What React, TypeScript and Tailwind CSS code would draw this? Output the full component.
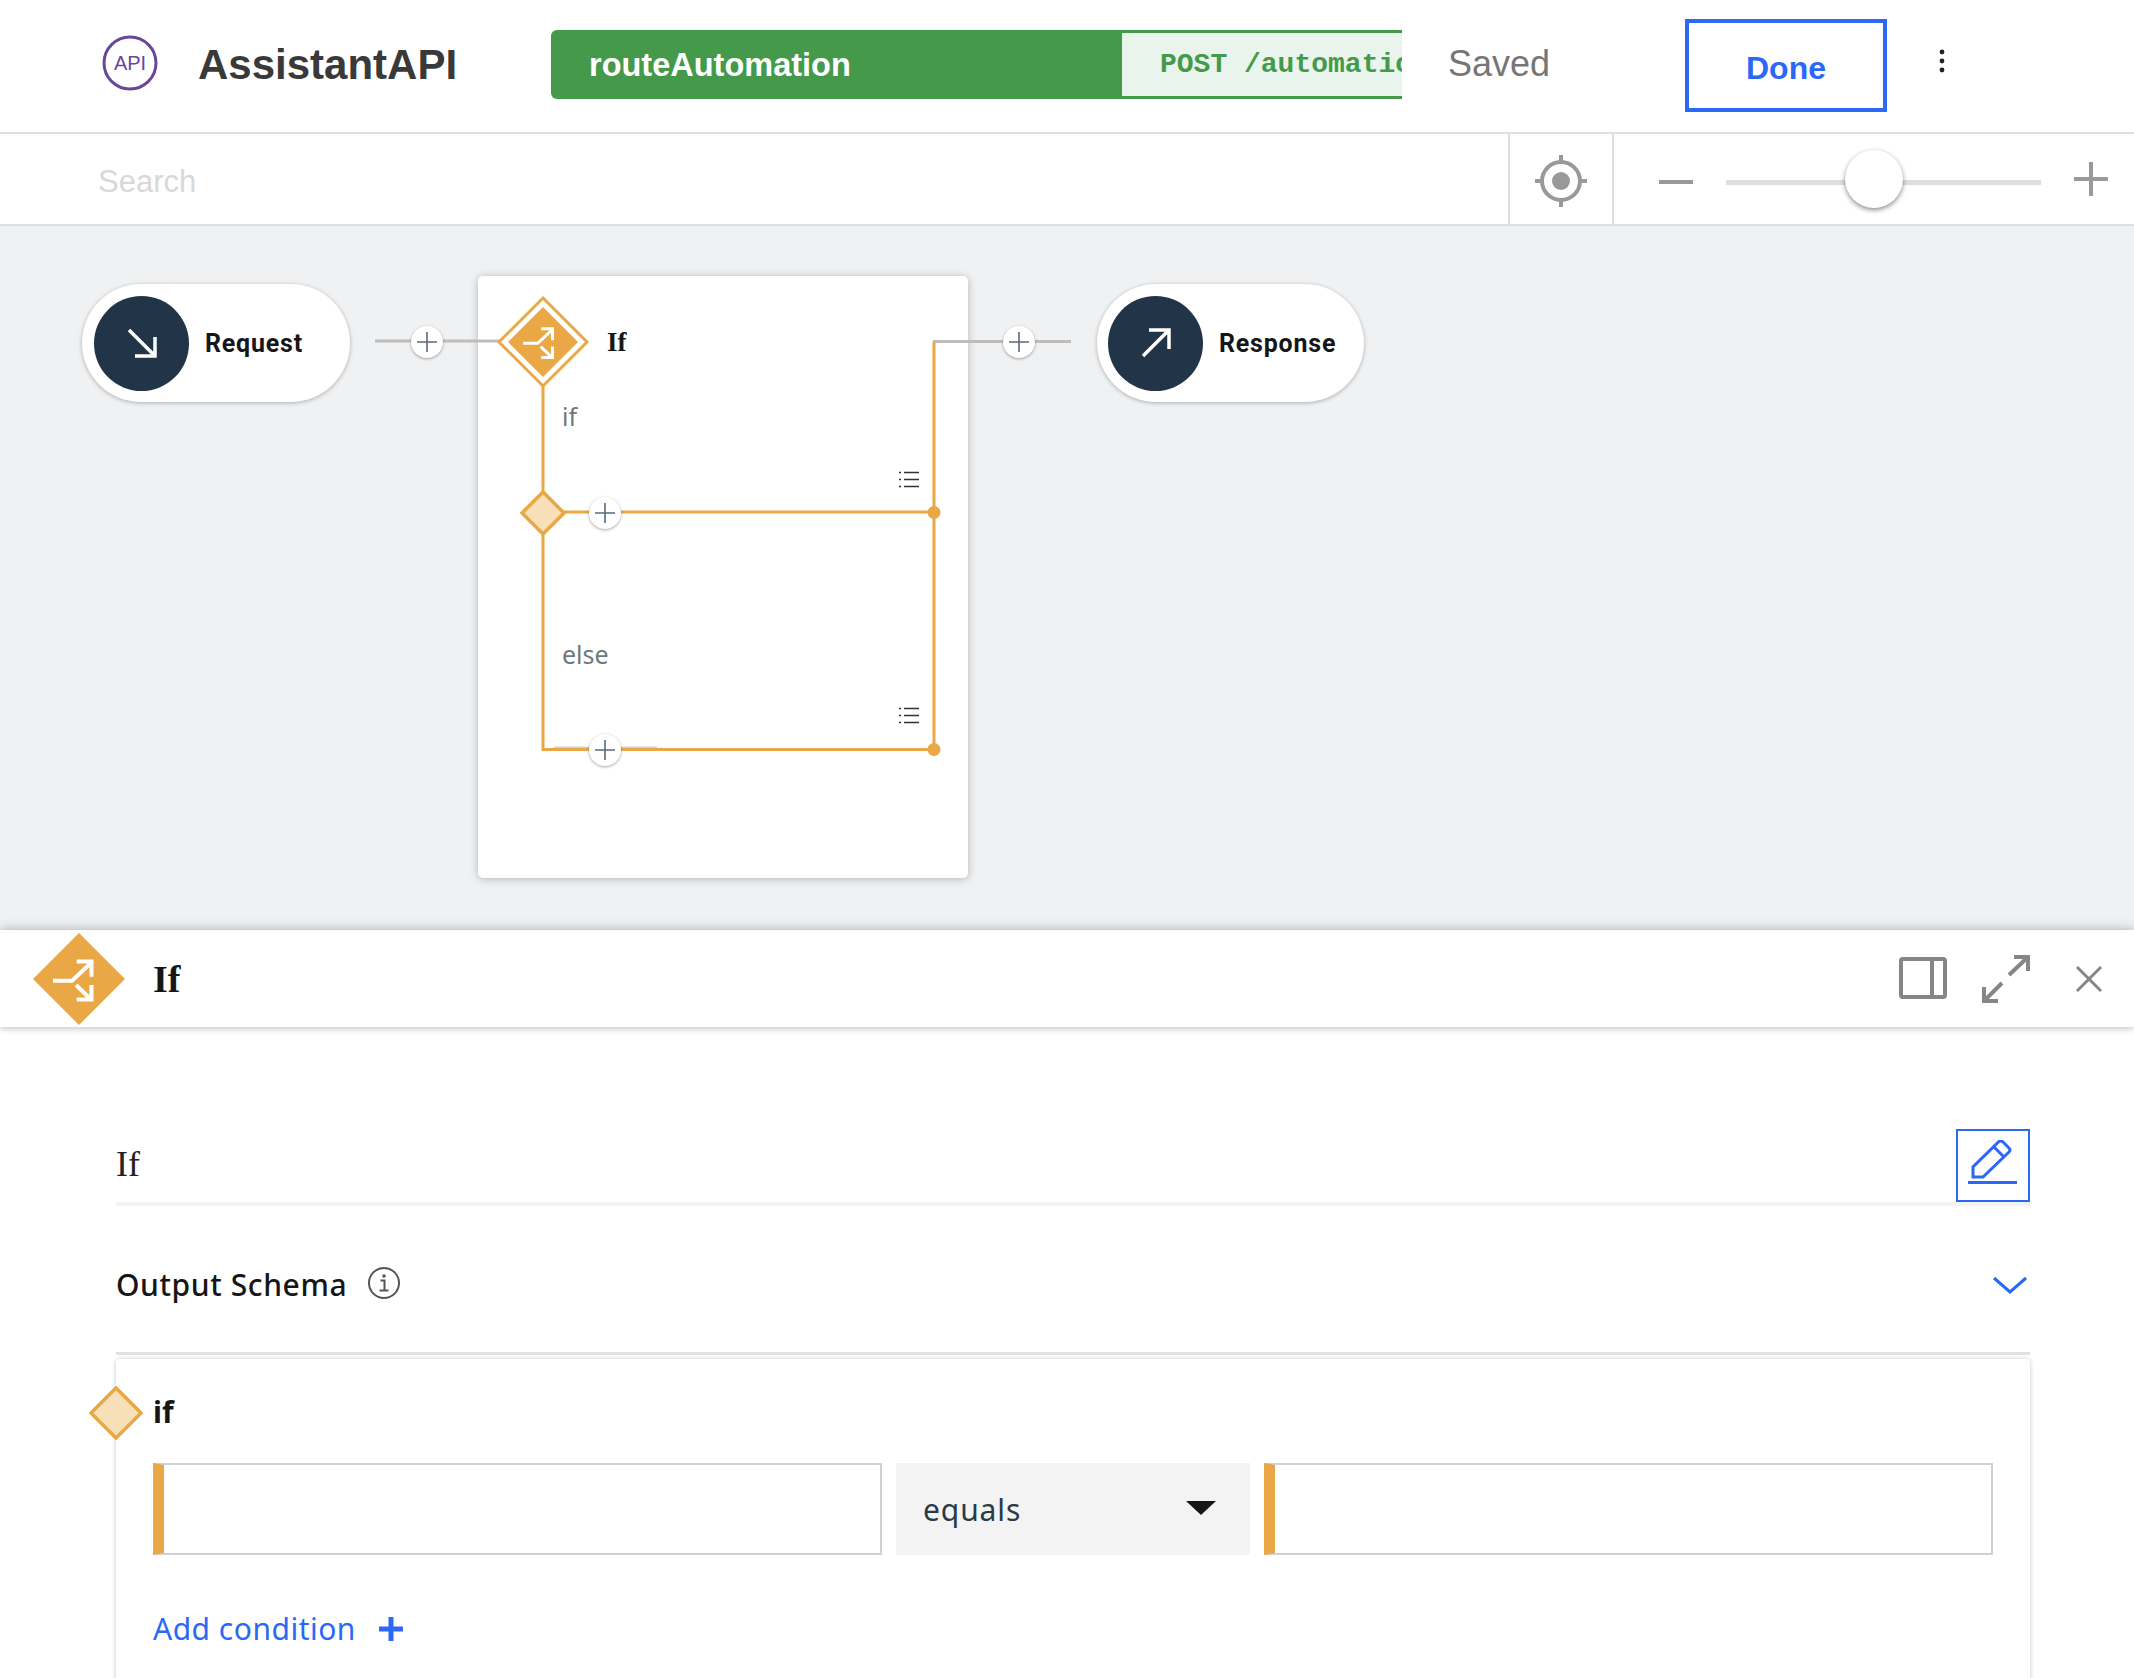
import React from "react";

const ORANGE = "#e9a845";

function Branch({ size }: { size: number }) {
  return (
    <svg width={size} height={size} viewBox="-46 -46 92 92" className="block">
      <polygon points="0,-46 46,0 0,46 -46,0" fill={ORANGE} />
      <g fill="none" stroke="#fff" strokeWidth="4">
        <path d="M-26 1.7H-7L13 -17" />
        <path d="M-2.3 -17.5H12.5V-2.3" />
        <path d="M-3 6L12 20.5" />
        <path d="M-2.3 20.5H12.5V6" />
      </g>
    </svg>
  );
}

function PlusButton({ className }: { className: string }) {
  return (
    <div className={`absolute flex h-8 w-8 items-center justify-center rounded-full bg-white shadow-[0_1px_3px_rgba(0,0,0,0.35)] ${className}`}>
      <svg width="20" height="20" viewBox="0 0 20 20">
        <path d="M10 0V20M0 10H20" stroke="#5a6b7b" strokeWidth="1.6" />
      </svg>
    </div>
  );
}

function ListIcon({ className }: { className: string }) {
  return (
    <svg width="20" height="17" viewBox="0 0 20 17" className={`absolute ${className}`}>
      <path d="M5 1.5H20M5 8.5H20M5 15.5H20" stroke="#2f3336" strokeWidth="1.5" />
      <path d="M0 1.5H2M0 8.5H2M0 15.5H2" stroke="#2f3336" strokeWidth="1.5" />
    </svg>
  );
}

function Pill({ label, className, arrow }: { label: string; className: string; arrow: string }) {
  return (
    <div className={`absolute flex h-[118px] items-center rounded-full bg-white shadow-[0_1px_4px_rgba(0,0,0,0.28)] ${className}`}>
      <div className="flex h-[95px] w-[95px] items-center justify-center rounded-full bg-[#223548]">
        <svg width="40" height="40" viewBox="0 0 40 40" fill="none" stroke="#fff" strokeWidth="3.5">
          <path d={arrow} />
        </svg>
      </div>
      <span className="ml-[16px] mt-[2px] font-['Roboto',sans-serif] text-[25px] font-bold tracking-[0.8px] text-[#161616]">{label}</span>
    </div>
  );
}

function Condition() {
  return <div className="h-full flex-1 border-2 border-l-[11px] border-[#cdd2d2] border-l-[#e9a845] bg-white" />;
}

export default function App() {
  return (
    <div className="flex h-[1678px] w-[2134px] flex-col overflow-hidden bg-white font-['Liberation_Sans',sans-serif]">
      <header className="flex h-[134px] shrink-0 items-center border-b-2 border-[#dfe0e2] pl-[102px]">
        <svg width="56" height="56" viewBox="0 0 56 56" className="mb-[6px]">
          <circle cx="28" cy="28" r="26" fill="none" stroke="#68479b" strokeWidth="3" />
          <text x="28" y="35" textAnchor="middle" fontSize="20" fontFamily="Liberation Sans" fill="#68479b">API</text>
        </svg>
        <h1 className="mb-[3px] ml-10 w-[353px] text-[42px] font-bold text-[#393939]">AssistantAPI</h1>
        <div className="mb-[4px] flex h-[69px] w-[851px] overflow-hidden rounded-l-[6px]">
          <div className="flex w-[571px] items-center bg-[#45994a] pl-[38px] pt-[2px] text-[32.5px] font-bold text-white">routeAutomation</div>
          <div className="flex flex-1 items-center overflow-hidden border-y-[3px] border-[#45994a] bg-[#e8f4ec] pl-[38px] pt-[1px]">
            <span className="whitespace-nowrap font-['Liberation_Mono',monospace] text-[28px] font-bold text-[#45994a]">POST /automation</span>
          </div>
        </div>
        <div className="mb-[4px] ml-[46px] w-[237px] text-[36px] text-[#767676]">Saved</div>
        <button className="mb-[1px] flex h-[93px] w-[202px] items-center justify-center border-[4px] border-[#2b68f6] pt-1 text-[32px] font-bold text-[#2b68f6]">Done</button>
        <svg width="8" height="24" viewBox="0 0 8 24" className="mb-[11px] ml-[51px]">
          <circle cx="4" cy="3" r="2.4" fill="#222" />
          <circle cx="4" cy="12" r="2.4" fill="#222" />
          <circle cx="4" cy="21" r="2.4" fill="#222" />
        </svg>
      </header>

      <div className="flex h-[92px] shrink-0 border-b-2 border-[#dfe0e2]">
        <input placeholder="Search" className="min-w-0 flex-1 pl-[98px] pt-[6px] text-[31px] outline-none placeholder:text-[#d8d8d8]" />
        <div className="flex w-[106px] shrink-0 items-center justify-center border-x-2 border-[#dfe0e2] pt-[3px]">
          <svg width="54" height="54" viewBox="0 0 54 54">
            <circle cx="27" cy="27" r="19" fill="none" stroke="#999" strokeWidth="4" />
            <circle cx="27" cy="27" r="9" fill="#999" />
            <path d="M27 1V9M27 45V53M1 27H9M45 27H53" stroke="#999" strokeWidth="4" />
          </svg>
        </div>
        <div className="flex w-[520px] shrink-0 items-center pl-[45px]">
          <div className="mt-[5px] h-1 w-[34px] bg-[#999]" />
          <div className="relative ml-[33px] mt-[6px] h-[5px] w-[315px] bg-[#dedede]">
            <div className="absolute left-[119px] top-[-30px] h-[58px] w-[58px] rounded-full bg-white shadow-[0_2px_5px_rgba(0,0,0,0.45)]" />
          </div>
          <svg width="34" height="34" viewBox="0 0 34 34" className="ml-[33px]">
            <path d="M17 0V34M0 17H34" stroke="#999" strokeWidth="4" />
          </svg>
        </div>
      </div>

      <main className="relative h-[704px] shrink-0 bg-[#f0f1f3]">
        <Pill label="Request" className="left-[82px] top-[58px] w-[268px] pl-3" arrow="M7 7L33 33M13 33H33V14" />
        <Pill label="Response" className="left-[1097px] top-[58px] w-[267px] pl-[11px]" arrow="M7 33L33 7M13 7H33V26" />

        <div className="absolute left-[478px] top-[50px] h-[602px] w-[490px] rounded-[5px] bg-white shadow-[0_1px_8px_rgba(0,0,0,0.25)]" />

        <svg width="2134" height="704" viewBox="0 226 2134 704" className="absolute inset-0">
          <path d="M375 341H505M933 341.500H1071" stroke="#bdbdbd" strokeWidth="3" fill="none" />
          <path d="M554 747.500H657" stroke="#d0d0d0" strokeWidth="2" fill="none" />
          <path d="M543 386V749.500H934M934 342V749M543 512H934" stroke={ORANGE} strokeWidth="3" fill="none" />
          <circle cx="934" cy="512.500" r="6.500" fill={ORANGE} />
          <circle cx="934" cy="749.500" r="6.500" fill={ORANGE} />
          <polygon points="543,298 587,342 543,386 499,342" fill="#fff" stroke={ORANGE} strokeWidth="3" />
          <polygon points="543,492 564,513 543,534 522,513" fill="#f7e0b8" stroke={ORANGE} strokeWidth="3.500" />
        </svg>

        <div className="absolute left-[508px] top-[81px]"><Branch size={70} /></div>
        <span className="absolute left-[607px] top-[100px] font-['Liberation_Serif',serif] text-[27px] font-bold leading-8 text-[#161616]">If</span>
        <span className="absolute left-[562px] top-[176px] font-['Noto_Sans',sans-serif] text-[25px] leading-7 text-[#6f7878]">if</span>
        <span className="absolute left-[562px] top-[414px] font-['Noto_Sans',sans-serif] text-[25px] leading-7 text-[#6f7878]">else</span>
        <ListIcon className="left-[899px] top-[245px]" />
        <ListIcon className="left-[899px] top-[481px]" />
        <PlusButton className="left-[411px] top-[100px]" />
        <PlusButton className="left-[589px] top-[271px]" />
        <PlusButton className="left-[589px] top-[508px]" />
        <PlusButton className="left-[1003px] top-[100px]" />
      </main>

      <section className="relative z-10 flex-1 bg-white shadow-[0_-3px_10px_rgba(0,0,0,0.15)]">
        <div className="flex h-[97px] items-center bg-white pl-[33px] pr-[31px] shadow-[0_2px_6px_rgba(0,0,0,0.22)]">
          <Branch size={92} />
          <h2 className="ml-[28px] mt-[2px] flex-1 font-['Liberation_Serif',serif] text-[38px] font-bold text-[#161616]">If</h2>
          <svg width="48" height="48" viewBox="0 0 48 48" fill="none" stroke="#868686" strokeWidth="4" className="mb-[2px] mr-[35px]">
            <rect x="2" y="5" width="44" height="38" rx="2" />
            <path d="M33 5V43" />
          </svg>
          <svg width="48" height="48" viewBox="0 0 48 48" fill="none" stroke="#868686" strokeWidth="4" className="mr-[45px]">
            <path d="M27 20L46 2M32 2H46V16M20 28L2 46M2 32V46H16" />
          </svg>
          <svg width="28" height="28" viewBox="0 0 28 28" fill="none" stroke="#868686" strokeWidth="3">
            <path d="M2 2L26 26M26 2L2 26" />
          </svg>
        </div>

        <div className="pl-[116px] pr-[104px] pt-[102px]">
          <div className="flex h-[77px] items-center justify-between border-b-4 border-[#f3f3f3]">
            <span className="mb-[3px] font-['Liberation_Serif',serif] text-[36px] text-[#222]">If</span>
            <button className="flex h-[73px] w-[74px] items-center justify-center self-start border-2 border-[#2b68f6]">
              <svg width="52" height="52" viewBox="0 0 52 52" fill="none" stroke="#2b68f6" strokeWidth="3">
                <path d="M1 42.500H50" />
                <path d="M6 37V27L32 1.500Q34 0 36 2L42 8Q44 10 42 12L16 37Z" />
                <path d="M27 7L37 17" />
              </svg>
            </button>
          </div>

          <div className="flex h-[149px] items-center border-b-[3px] border-[#e0e0e0] pr-[2px] pt-[11px]">
            <span className="font-['Noto_Sans',sans-serif] text-[30px] font-medium tracking-[0.6px] text-[#161616]">Output Schema</span>
            <svg width="34" height="34" viewBox="0 0 34 34" className="mb-[4px] ml-5 flex-none">
              <circle cx="17" cy="17" r="15" fill="none" stroke="#555" strokeWidth="2" />
              <circle cx="17" cy="10" r="1.800" fill="#555" />
              <path d="M13.500 14.500H17.500V24M12.500 24.500H21.500" fill="none" stroke="#555" strokeWidth="2" />
            </svg>
            <svg width="36" height="18" viewBox="0 0 36 18" className="ml-auto" fill="none" stroke="#2b68f6" strokeWidth="3">
              <path d="M2 2L18 16L34 2" />
            </svg>
          </div>

          <div className="relative mt-[4px] h-[400px] rounded-t-[4px] bg-white px-[37px] shadow-[0_0_5px_rgba(0,0,0,0.22)]">
            <svg width="54" height="54" viewBox="0 0 54 54" className="absolute left-[-27px] top-[27px]">
              <polygon points="27,2 52,27 27,52 2,27" fill="#f7e0b8" stroke={ORANGE} strokeWidth="3.500" />
            </svg>
            <div className="flex h-[104px] items-center font-['Noto_Sans',sans-serif] text-[30px] font-bold text-[#161616]">if</div>
            <div className="flex h-[92px] gap-[14px]">
              <Condition />
              <div className="relative flex h-full w-[354px] shrink-0 items-center bg-[#f3f3f3] pl-[27px] font-['Noto_Sans',sans-serif] text-[30px] tracking-[0.9px] text-[#2a3a46]">
                equals
                <svg width="30" height="14" viewBox="0 0 30 14" className="absolute right-[34px] top-[38px]">
                  <polygon points="0,0 30,0 15,14" fill="#161616" />
                </svg>
              </div>
              <Condition />
            </div>
            <div className="mt-[56px] flex items-center">
              <span className="font-['Noto_Sans',sans-serif] text-[30px] leading-9 tracking-[0.5px] text-[#2b68f6]">Add condition</span>
              <svg width="24" height="24" viewBox="0 0 24 24" className="ml-[23px]">
                <path d="M12 0V24M0 12H24" stroke="#2b68f6" strokeWidth="5" />
              </svg>
            </div>
          </div>
        </div>
      </section>
    </div>
  );
}
